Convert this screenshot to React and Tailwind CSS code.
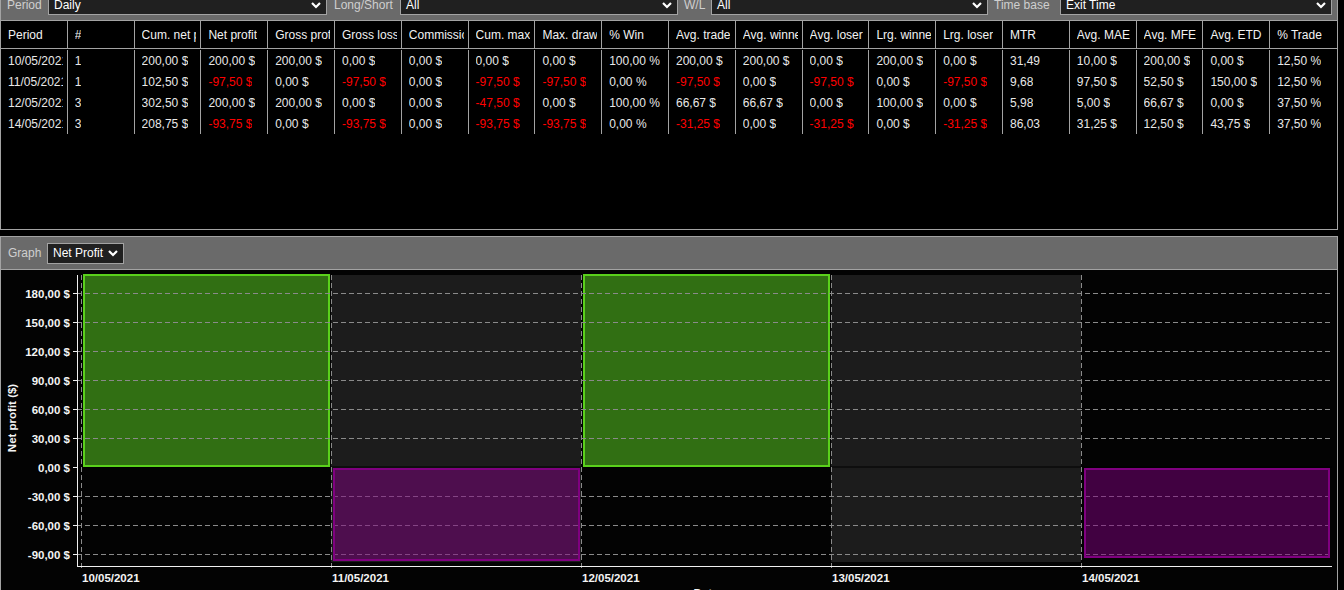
import React from "react";

const columns = [
  "Period", "#", "Cum. net profit", "Net profit", "Gross profit", "Gross loss", "Commission",
  "Cum. max drawdown", "Max. drawdown", "% Win", "Avg. trade", "Avg. winner", "Avg. loser",
  "Lrg. winner", "Lrg. loser", "MTR", "Avg. MAE", "Avg. MFE", "Avg. ETD", "% Trade",
];

// "-" prefixed values are drawn red
const rows = [
  ["10/05/2021", "1", "200,00 $", "200,00 $", "200,00 $", "0,00 $", "0,00 $", "0,00 $", "0,00 $", "100,00 %", "200,00 $", "200,00 $", "0,00 $", "200,00 $", "0,00 $", "31,49", "10,00 $", "200,00 $", "0,00 $", "12,50 %"],
  ["11/05/2021", "1", "102,50 $", "-97,50 $", "0,00 $", "-97,50 $", "0,00 $", "-97,50 $", "-97,50 $", "0,00 %", "-97,50 $", "0,00 $", "-97,50 $", "0,00 $", "-97,50 $", "9,68", "97,50 $", "52,50 $", "150,00 $", "12,50 %"],
  ["12/05/2021", "3", "302,50 $", "200,00 $", "200,00 $", "0,00 $", "0,00 $", "-47,50 $", "0,00 $", "100,00 %", "66,67 $", "66,67 $", "0,00 $", "100,00 $", "0,00 $", "5,98", "5,00 $", "66,67 $", "0,00 $", "37,50 %"],
  ["14/05/2021", "3", "208,75 $", "-93,75 $", "0,00 $", "-93,75 $", "0,00 $", "-93,75 $", "-93,75 $", "0,00 %", "-31,25 $", "0,00 $", "-31,25 $", "0,00 $", "-31,25 $", "86,03", "31,25 $", "12,50 $", "43,75 $", "37,50 %"],
];

const Chevron = () => (
  <svg width="10" height="7" viewBox="0 0 10 7" className="shrink-0">
    <polyline points="1,1 5,5 9,1" fill="none" stroke="#ffffff" strokeWidth="2.2" />
  </svg>
);

const Select = ({ value, className }) => (
  <div className={`flex items-center justify-between bg-[#202020] border border-[#a3a3a3] pl-[5px] pr-[5px] text-white ${className}`}>
    <span className="whitespace-nowrap">{value}</span>
    <Chevron />
  </div>
);

const ticks = [180, 150, 120, 90, 60, 30, 0, -30, -60, -90];
const yOf = (v) => 467 - (v * 29) / 30;
const days = ["10/05/2021", "11/05/2021", "12/05/2021", "13/05/2021", "14/05/2021"];

const Chart = () => (
  <svg width="1336" height="320" className="block">
    <g transform="translate(-1,-270)" fontFamily="'Liberation Sans', Arial, sans-serif" fontWeight="bold" fontSize="11.5">
      {/* alternating day bands */}
      <rect x="331" y="275" width="250" height="287" fill="#1c1c1c" />
      <rect x="831" y="275" width="250" height="287" fill="#1c1c1c" />
      <line x1="77" y1="467" x2="1332" y2="467" stroke="#000" strokeWidth="1" />

      {/* profit bars */}
      <rect x="84" y="275" width="245" height="191" fill="#316f13" stroke="#5ad11b" strokeWidth="2" />
      <rect x="584" y="275" width="245" height="191" fill="#316f13" stroke="#5ad11b" strokeWidth="2" />

      {/* grid */}
      {ticks.filter((t) => t !== 0).map((t) => (
        <line key={t} x1="77" y1={yOf(t) + 0.5} x2="1332" y2={yOf(t) + 0.5} stroke="#8a8a8a" strokeDasharray="5 3" />
      ))}
      {[81, 331, 581, 831, 1081].map((x) => (
        <line key={x} x1={x + 0.5} y1="275" x2={x + 0.5} y2="570" stroke="#8a8a8a" strokeDasharray="5 3" />
      ))}

      {/* loss bars */}
      <rect x="334" y="469" width="245" height="91" fill="rgba(128,0,128,0.5)" stroke="#800080" strokeWidth="2" />
      <rect x="1085" y="469" width="244" height="88" fill="rgba(128,0,128,0.5)" stroke="#800080" strokeWidth="2" />

      {/* axes */}
      <line x1="77.5" y1="275" x2="77.5" y2="567" stroke="#f0f0f0" />
      <line x1="77" y1="566.5" x2="1332" y2="566.5" stroke="#f0f0f0" />
      {ticks.map((t) => (
        <g key={t}>
          <line x1="73" y1={yOf(t) + 0.5} x2="77" y2={yOf(t) + 0.5} stroke="#f0f0f0" />
          <text x="70" y={yOf(t) + 4.5} textAnchor="end" fill="#f4f4f4">
            {t.toFixed(2).replace(".", ",")} $
          </text>
        </g>
      ))}
      {days.map((d, i) => (
        <text key={d} x={82 + i * 250} y="582" fill="#f4f4f4">{d}</text>
      ))}
      <text x="706" y="597" textAnchor="middle" fill="#f4f4f4">Date</text>
      <text transform="translate(16,418) rotate(-90)" textAnchor="middle" fill="#f4f4f4">Net profit ($)</text>
    </g>
  </svg>
);

const Cell = ({ children, className }) => (
  <div className={`flex items-center min-w-0 pl-[7px] pr-[4px] border-r border-[#a3a3a3] last:border-r-0 ${className}`}>
    <span className="block overflow-hidden whitespace-nowrap">{children}</span>
  </div>
);

const App = () => {
  return (
    <div className="min-h-screen bg-black text-[12px] font-['Liberation_Sans',Arial,sans-serif]">
      <div className="w-[1338px]">
        {/* Filter bar */}
        <div className="h-[20px] overflow-hidden bg-[#6a6a6a] border-x border-[#a3a3a3]">
          <div className="flex items-center -mt-[5px] h-[20px]">
            <span className="w-[47px] pl-[6px] text-[#cfcfcf]">Period</span>
            <Select value="Daily" className="w-[279px] h-[20px]" />
            <span className="w-[73px] pl-[7px] text-[#cfcfcf]">Long/Short</span>
            <Select value="All" className="w-[278px] h-[20px]" />
            <span className="w-[33px] pl-[6px] text-[#cfcfcf]">W/L</span>
            <Select value="All" className="w-[277px] h-[20px]" />
            <span className="w-[72px] pl-[6px] text-[#cfcfcf]">Time base</span>
            <Select value="Exit Time" className="w-[272px] h-[20px]" />
          </div>
        </div>

        {/* Statistics table */}
        <div className="h-[210px] bg-black border-x border-y border-[#a3a3a3]">
          <div className="grid grid-cols-[repeat(20,minmax(0,1fr))] h-[28px] border-b border-[#a3a3a3]">
            {columns.map((c) => (
              <Cell key={c} className="text-[#f2f2f2]">{c}</Cell>
            ))}
          </div>
          {rows.map((row, r) => (
            <div key={r} className={`grid grid-cols-[repeat(20,minmax(0,1fr))] ${r === 0 ? "pt-[1px] h-[22px]" : "h-[21px]"}`}>
              {row.map((v, i) => (
                <Cell key={i} className={v.startsWith("-") ? "text-[#ff0000]" : "text-[#e8e8e8]"}>
                  {v}
                </Cell>
              ))}
            </div>
          ))}
        </div>

        <div className="h-[6px]" />

        {/* Graph panel */}
        <div className="border-x border-[#a3a3a3]">
          <div className="flex items-center h-[34px] bg-[#6a6a6a] border-y border-[#a3a3a3]">
            <span className="pl-[7px] w-[46px] text-[#cfcfcf]">Graph</span>
            <Select value="Net Profit" className="w-[77px] h-[21px]" />
          </div>
          <div className="h-[320px] overflow-hidden bg-[#030303]">
            <Chart />
          </div>
        </div>
      </div>
    </div>
  );
};

export default App;
